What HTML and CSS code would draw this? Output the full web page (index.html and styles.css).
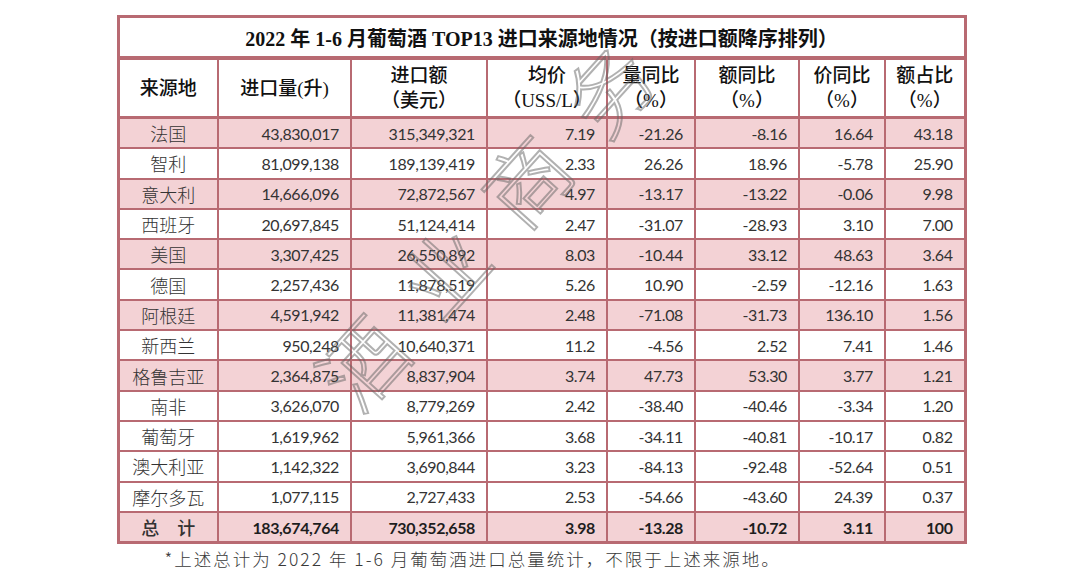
FILE: index.html
```html
<!DOCTYPE html>
<html lang="zh">
<head>
<meta charset="utf-8">
<title>2022年1-6月葡萄酒TOP13进口来源地情况</title>
<link rel="stylesheet" href="styles.css">
</head>
<body>
<div class="page">
  <div class="sheet">
    <table class="wine">
      <colgroup>
        <col class="c1"><col class="c2"><col class="c3"><col class="c4"><col class="c5"><col class="c6"><col class="c7"><col class="c8">
      </colgroup>
      <thead>
        <tr class="title-row"><th colspan="8" class="title">2022 年 1-6 月葡萄酒 TOP13 进口来源地情况（按进口额降序排列）</th></tr>
        <tr class="head-row">
          <th>来源地</th>
          <th>进口量(升)</th>
          <th>进口额<br>（美元）</th>
          <th>均价<br><span class="lat">（USS/L）</span></th>
          <th>量同比<br>（%）</th>
          <th>额同比<br>（%）</th>
          <th>价同比<br>（%）</th>
          <th>额占比<br>（%）</th>
        </tr>
      </thead>
      <tbody>
        <tr class="pink"><td>法国</td><td>43,830,017</td><td>315,349,321</td><td>7.19</td><td>-21.26</td><td>-8.16</td><td>16.64</td><td>43.18</td></tr>
        <tr><td>智利</td><td>81,099,138</td><td>189,139,419</td><td>2.33</td><td>26.26</td><td>18.96</td><td>-5.78</td><td>25.90</td></tr>
        <tr class="pink"><td>意大利</td><td>14,666,096</td><td>72,872,567</td><td>4.97</td><td>-13.17</td><td>-13.22</td><td>-0.06</td><td>9.98</td></tr>
        <tr><td>西班牙</td><td>20,697,845</td><td>51,124,414</td><td>2.47</td><td>-31.07</td><td>-28.93</td><td>3.10</td><td>7.00</td></tr>
        <tr class="pink"><td>美国</td><td>3,307,425</td><td>26,550,892</td><td>8.03</td><td>-10.44</td><td>33.12</td><td>48.63</td><td>3.64</td></tr>
        <tr><td>德国</td><td>2,257,436</td><td>11,878,519</td><td>5.26</td><td>10.90</td><td>-2.59</td><td>-12.16</td><td>1.63</td></tr>
        <tr class="pink"><td>阿根廷</td><td>4,591,942</td><td>11,381,474</td><td>2.48</td><td>-71.08</td><td>-31.73</td><td>136.10</td><td>1.56</td></tr>
        <tr><td>新西兰</td><td>950,248</td><td>10,640,371</td><td>11.2</td><td>-4.56</td><td>2.52</td><td>7.41</td><td>1.46</td></tr>
        <tr class="pink"><td>格鲁吉亚</td><td>2,364,875</td><td>8,837,904</td><td>3.74</td><td>47.73</td><td>53.30</td><td>3.77</td><td>1.21</td></tr>
        <tr><td>南非</td><td>3,626,070</td><td>8,779,269</td><td>2.42</td><td>-38.40</td><td>-40.46</td><td>-3.34</td><td>1.20</td></tr>
        <tr><td>葡萄牙</td><td>1,619,962</td><td>5,961,366</td><td>3.68</td><td>-34.11</td><td>-40.81</td><td>-10.17</td><td>0.82</td></tr>
        <tr><td>澳大利亚</td><td>1,142,322</td><td>3,690,844</td><td>3.23</td><td>-84.13</td><td>-92.48</td><td>-52.64</td><td>0.51</td></tr>
        <tr><td>摩尔多瓦</td><td>1,077,115</td><td>2,727,433</td><td>2.53</td><td>-54.66</td><td>-43.60</td><td>24.39</td><td>0.37</td></tr>
        <tr class="pink total"><td>总　计</td><td>183,674,764</td><td>730,352,658</td><td>3.98</td><td>-13.28</td><td>-10.72</td><td>3.11</td><td>100</td></tr>
      </tbody>
    </table>
    <p class="note">*上述总计为 2022 年 1-6 月葡萄酒进口总量统计，不限于上述来源地。</p>
    <div class="watermark" aria-hidden="true">酒 业 商 务</div>
  </div>
</div>
</body>
</html>
```
FILE: styles.css
```css
html, body {
  margin: 0;
  padding: 0;
  background: #ffffff;
}
.page {
  width: 1080px;
  height: 579px;
  overflow: hidden;
  display: flex;
  justify-content: center;
}
.sheet {
  position: relative;
  width: 847px;
  padding-top: 15px;
}
.wine {
  width: 847px;
  border-collapse: collapse;
  table-layout: fixed;
  border: 3px solid #b86a72;
  font-family: Lato, "Noto Sans CJK SC", sans-serif;
  color: #333333;
}
.c1 { width: 100px; }
.c2 { width: 133px; }
.c3 { width: 136px; }
.c4 { width: 120px; }
.c5 { width: 88px; }
.c6 { width: 104px; }
.c7 { width: 86px; }
.c8 { width: 80px; }
.wine th, .wine td {
  border: 2px solid #b86a72;
  padding: 0;
}
.title-row th {
  height: 38px;
  font-family: "Liberation Serif", "Noto Sans CJK SC", serif;
  font-weight: bold;
  font-size: 20px;
  color: #111;
  border-bottom: 4px solid #b86a72;
}
.head-row th {
  height: 56px;
  font-family: "Liberation Serif", "Noto Sans CJK SC", serif;
  font-weight: 500;
  font-size: 19px;
  line-height: 25px;
  color: #111;
  border-bottom: 3px solid #b86a72;
}
.lat {
  font-family: "Liberation Serif", "Noto Sans CJK SC", serif;
}
.wine td {
  height: 28.3px;
  font-size: 16px;
  letter-spacing: -0.4px;
  text-align: right;
  padding-right: 11px;
}
.wine td:first-child {
  text-align: center;
  padding-right: 0;
  letter-spacing: 0;
  font-family: "Noto Sans CJK SC", sans-serif;
  font-weight: 300;
  font-size: 18px;
  color: #333;
}
.pink td {
  background: #f3d2d5;
}
.total td {
  font-weight: bold;
  color: #1e1e1e;
}
.total td:first-child {
  font-weight: 500;
}
.note {
  margin: 2px 0 0 48px;
  font-family: "Noto Sans CJK SC", sans-serif;
  font-weight: 300;
  font-size: 17.5px;
  letter-spacing: 2px;
  color: #3a3a3a;
}
.watermark {
  position: absolute;
  left: 215px;
  top: 350px;
  font-family: "Noto Sans CJK SC", sans-serif;
  font-size: 84px;
  font-weight: 300;
  word-spacing: 20px;
  line-height: 84px;
  color: transparent;
  -webkit-text-stroke: 2px rgba(100, 100, 100, 0.5);
  transform: rotate(-48deg);
  transform-origin: left center;
  white-space: nowrap;
  pointer-events: none;
}
```
